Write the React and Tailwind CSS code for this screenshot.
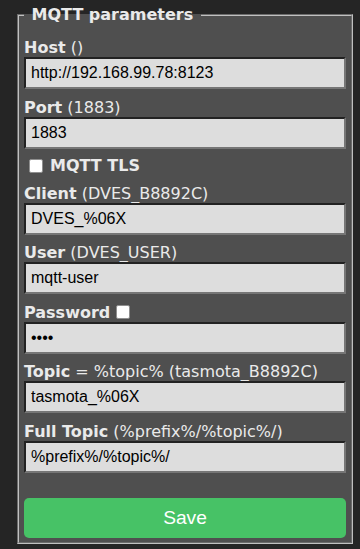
const labelFont = { fontFamily: "'DejaVu Sans', Verdana, sans-serif" }

function Box({ className = "" }) {
  return (
    <span
      className={`inline-block w-[14px] h-[14px] bg-white border border-[#8f8f8f] rounded-[2px] ${className}`}
    />
  )
}

function Field({ bold, rest, value, type = "text", after }) {
  return (
    <div className="flex flex-col">
      <div className="flex items-center h-[19px] leading-[19px] text-[16px] text-[#eaeaea] whitespace-pre">
        <b className="font-bold">{bold}</b>
        {rest && <span>{rest}</span>}
        {after}
      </div>
      <input
        type={type}
        readOnly
        defaultValue={value}
        className="w-full h-[32px] px-[5px] bg-[#dddddd] text-black text-[16px] font-['Liberation_Sans',Arial,sans-serif] border-2 border-t-[#222222] border-l-[#222222] border-r-[#767676] border-b-[#767676] outline-none"
      />
    </div>
  )
}

export default function App() {
  return (
    <div className="w-[360px] h-[549px] bg-[#252525] pt-[5px] pl-[17px]" style={labelFont}>
      <fieldset className="w-[336px] bg-[#4f4f4f] border-2 [border-style:groove] border-[#c0c0c0] px-[5px] pt-[14px] pb-[4px]">
        <legend className="px-[2px] leading-[19px] text-[16px] font-bold text-[#eaeaea]">
          {"\u00a0MQTT parameters\u00a0"}
        </legend>

        <div className="flex flex-col gap-[8.5px]">
          <Field bold="Host" rest=" ()" value="http://192.168.99.78:8123" />
          <Field bold="Port" rest=" (1883)" value="1883" />

          <div className="flex items-center h-[18px] text-[16px] text-[#eaeaea]">
            <Box className="ml-[5px] mr-[7px]" />
            <b className="font-bold">MQTT TLS</b>
          </div>

          <Field bold="Client" rest=" (DVES_B8892C)" value="DVES_%06X" />
          <Field bold="User" rest=" (DVES_USER)" value="mqtt-user" />
          <Field bold="Password" value="abcd" type="password" after={<Box className="ml-[6px]" />} />
          <Field bold="Topic" rest=" = %topic% (tasmota_B8892C)" value="tasmota_%06X" />
          <Field bold="Full Topic" rest=" (%prefix%/%topic%/)" value="%prefix%/%topic%/" />
        </div>

        <button className="mt-[25.5px] w-full h-[40px] rounded-[5px] bg-[#47c266] text-white text-[19.2px] font-['Liberation_Sans',Arial,sans-serif] flex items-center justify-center">
          Save
        </button>
      </fieldset>
    </div>
  )
}
